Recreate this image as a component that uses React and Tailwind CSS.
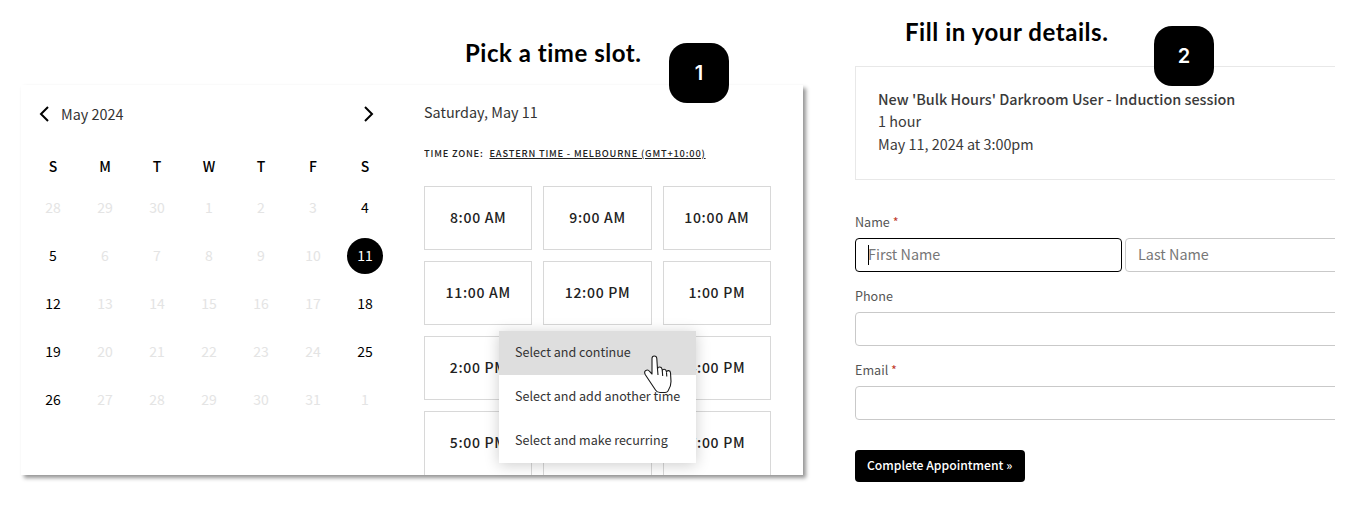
const SANS = "font-['Noto_Sans_CJK_JP','Noto_Sans',sans-serif]";

const days = [
  [[28,0],[29,0],[30,0],[1,0],[2,0],[3,0],[4,1]],
  [[5,1],[6,0],[7,0],[8,0],[9,0],[10,0],[11,2]],
  [[12,1],[13,0],[14,0],[15,0],[16,0],[17,0],[18,1]],
  [[19,1],[20,0],[21,0],[22,0],[23,0],[24,0],[25,1]],
  [[26,1],[27,0],[28,0],[29,0],[30,0],[31,0],[1,0]],
];
const slots = ["8:00 AM","9:00 AM","10:00 AM","11:00 AM","12:00 PM","1:00 PM","2:00 PM","3:00 PM","4:00 PM","5:00 PM","6:00 PM","7:00 PM"];

function Chevron({ left }) {
  return (
    <svg width="14" height="18" viewBox="0 0 14 18" fill="none" stroke="#000" strokeWidth="2" className="block">
      <path d={left ? "M11 2 4 9l7 7" : "M3 2l7 7-7 7"} />
    </svg>
  );
}

function Badge({ n, className }) {
  return (
    <div className={"absolute w-[60px] h-[60px] rounded-[18px] bg-black text-white flex items-center justify-center text-[20px] font-semibold font-['Inter',sans-serif] " + className}>
      {n}
    </div>
  );
}

function Hand() {
  return (
    <svg width="60" height="60" viewBox="0 0 60 60" className="absolute left-[131px] top-[9px]" fill="#fff" stroke="#1a1a1a" strokeWidth="1.1" strokeLinejoin="round">
      <path d="M22 34V18.500c0-3.400 4.600-3.400 4.800 0l.7 10.500c.2-2.600 4-2.600 4.500 0l.3 2c.1-2.500 3.700-2.300 4 .2l.2 1c.5-2.300 3.800-2 4 .6l.5 8.700c.1 3-1 6.500-3 9.500-.5.800-1.500 1.500-3 1.500h-5c-2 0-3.500-.8-4.500-2.500L15.500 35c-1-1.700-1.200-3.600.3-4.500 1.500-.9 3-.2 4 1.200z" />
      <path d="M27.500 29l.5 6M32.300 31l.4 5M36.500 32.500l.3 4" fill="none" />
    </svg>
  );
}

function Field({ label, required, children }) {
  return (
    <div className="flex flex-col">
      <div className="h-[26px] text-[12.6px] leading-[20px] text-[#555]">
        {label}{required && <span className="text-[#c0392b]"> *</span>}
      </div>
      {children}
    </div>
  );
}

const inputCls = "h-[34px] rounded-[4px] border border-[#c9c9c9] bg-white px-[12px] pb-[3px] text-[14.4px] outline-none placeholder:text-[#777] " + SANS;

export default function App() {
  return (
    <div className={"relative w-[1351px] h-[529px] overflow-hidden bg-white flex text-[#333] " + SANS}>
      {/* Step 1 */}
      <section className="relative ml-[21px] w-[782px] shrink-0">
        <h2 className="h-[85px] pt-[36px] pl-[444px] text-[24px] leading-[34px] font-bold tracking-[0.52px] text-black font-['Lato',sans-serif] whitespace-nowrap">
          Pick a time slot.
        </h2>
        <div className="relative h-[390px] bg-white flex shadow-[3px_3px_4px_rgba(0,0,0,0.42)]">
          <div className="w-[403px] shrink-0 overflow-hidden">
            <div className="flex items-center h-[30px] mt-[14px] pl-[16px] w-[355px]">
              <Chevron left />
              <span className="ml-[10px] pb-[1px] text-[14.4px] text-[#333]">May 2024</span>
              <span className="ml-auto"><Chevron /></span>
            </div>
            <div className="ml-[6px] w-[364px] mt-[27px] grid grid-cols-7 text-center text-[14px] font-medium leading-[20px] text-black h-[28px]">
              {["S","M","T","W","T","F","S"].map((d, i) => <div key={i}>{d}</div>)}
            </div>
            <div className="ml-[6px] w-[364px] grid grid-cols-7 auto-rows-[48px] text-center text-[14px]">
              {days.flat().map(([d, s], i) => (
                <div key={i} className="flex items-center justify-center">
                  <span className={
                    s === 2 ? "w-[36px] h-[36px] rounded-full bg-black text-white flex items-center justify-center pb-[1px]"
                    : s === 1 ? "text-black pb-[2px]" : "text-[#e4e4e4] pb-[2px]"
                  }>{d}</span>
                </div>
              ))}
            </div>
          </div>
          <div className="flex-1 overflow-hidden">
            <div className="mt-[15px] h-[24px] leading-[24px] text-[14.4px] text-[#333]">Saturday, May 11</div>
            <div className="mt-[19px] h-[20px] leading-[20px] text-[9.3px] font-medium tracking-[0.8px] text-[#222] uppercase whitespace-nowrap">
              Time zone: <span className="ml-[3px] underline">Eastern Time - Melbourne (GMT+10:00)</span>
            </div>
            <div className="mt-[23px] w-[347px] grid grid-cols-3 gap-[11px] auto-rows-[64px]">
              {slots.map((t, i) => (
                <div key={t} className={"border border-[#d8d8d8] flex items-center justify-center pb-[2px] text-[14px] font-medium tracking-[0.7px] text-[#222] " + (i > 8 ? "border-b-0 " : "")}>
                  {t}
                </div>
              ))}
            </div>
          </div>
          {/* Popover menu */}
          <div className="absolute left-[478px] top-[246px] w-[197px] bg-white shadow-[0_2px_14px_rgba(0,0,0,0.2)] text-[12.55px] text-[#333]">
            <div className="relative h-[44px] bg-[#dedede] pl-[16px] pb-[2px] flex items-center">Select and continue<Hand /></div>
            <div className="h-[44px] pl-[16px] pb-[2px] flex items-center whitespace-nowrap">Select and add another time</div>
            <div className="h-[44px] pl-[16px] pb-[2px] flex items-center">Select and make recurring</div>
          </div>
        </div>
        <Badge n="1" className="left-[648px] top-[43px]" />
      </section>

      {/* Step 2 */}
      <section className="ml-[52px] w-[480px] shrink-0 overflow-hidden">
        <h2 className="h-[66px] pt-[15px] pl-[50px] text-[24px] leading-[34px] font-bold tracking-[0.55px] text-black font-['Lato',sans-serif] whitespace-nowrap">
          Fill in your details.
        </h2>
        <div className="w-[520px] h-[114px] border border-[#e8e8e8] pt-[21px] pl-[22px] text-[14.4px] leading-[22px] text-[#3a3a3a]">
          <div className="font-medium whitespace-nowrap">New 'Bulk Hours' Darkroom User - Induction session</div>
          <div>1 hour</div>
          <div className="mt-[1px]">May 11, 2024 at 3:00pm</div>
        </div>
        <div className="mt-[32px] w-[540px] flex flex-col gap-[14px]">
          <Field label="Name" required>
            <div className="flex gap-[3px]">
              <div className="relative">
                <input placeholder="First Name" className={inputCls + " w-[267px] border-black"} />
                <span className="absolute left-[13px] top-[7px] w-px h-[20px] bg-black" />
              </div>
              <input placeholder="Last Name" className={inputCls + " w-[270px]"} />
            </div>
          </Field>
          <Field label="Phone"><input className={inputCls + " w-full"} /></Field>
          <Field label="Email" required><input className={inputCls + " w-full"} /></Field>
        </div>
        <button className="mt-[30px] h-[32px] w-[170px] rounded-[4px] bg-black text-white text-[12.2px] font-medium text-left pl-[12px] pb-[2px] whitespace-nowrap">
          Complete Appointment »
        </button>
      </section>
      <Badge n="2" className="left-[1154px] top-[26px]" />
    </div>
  );
}
